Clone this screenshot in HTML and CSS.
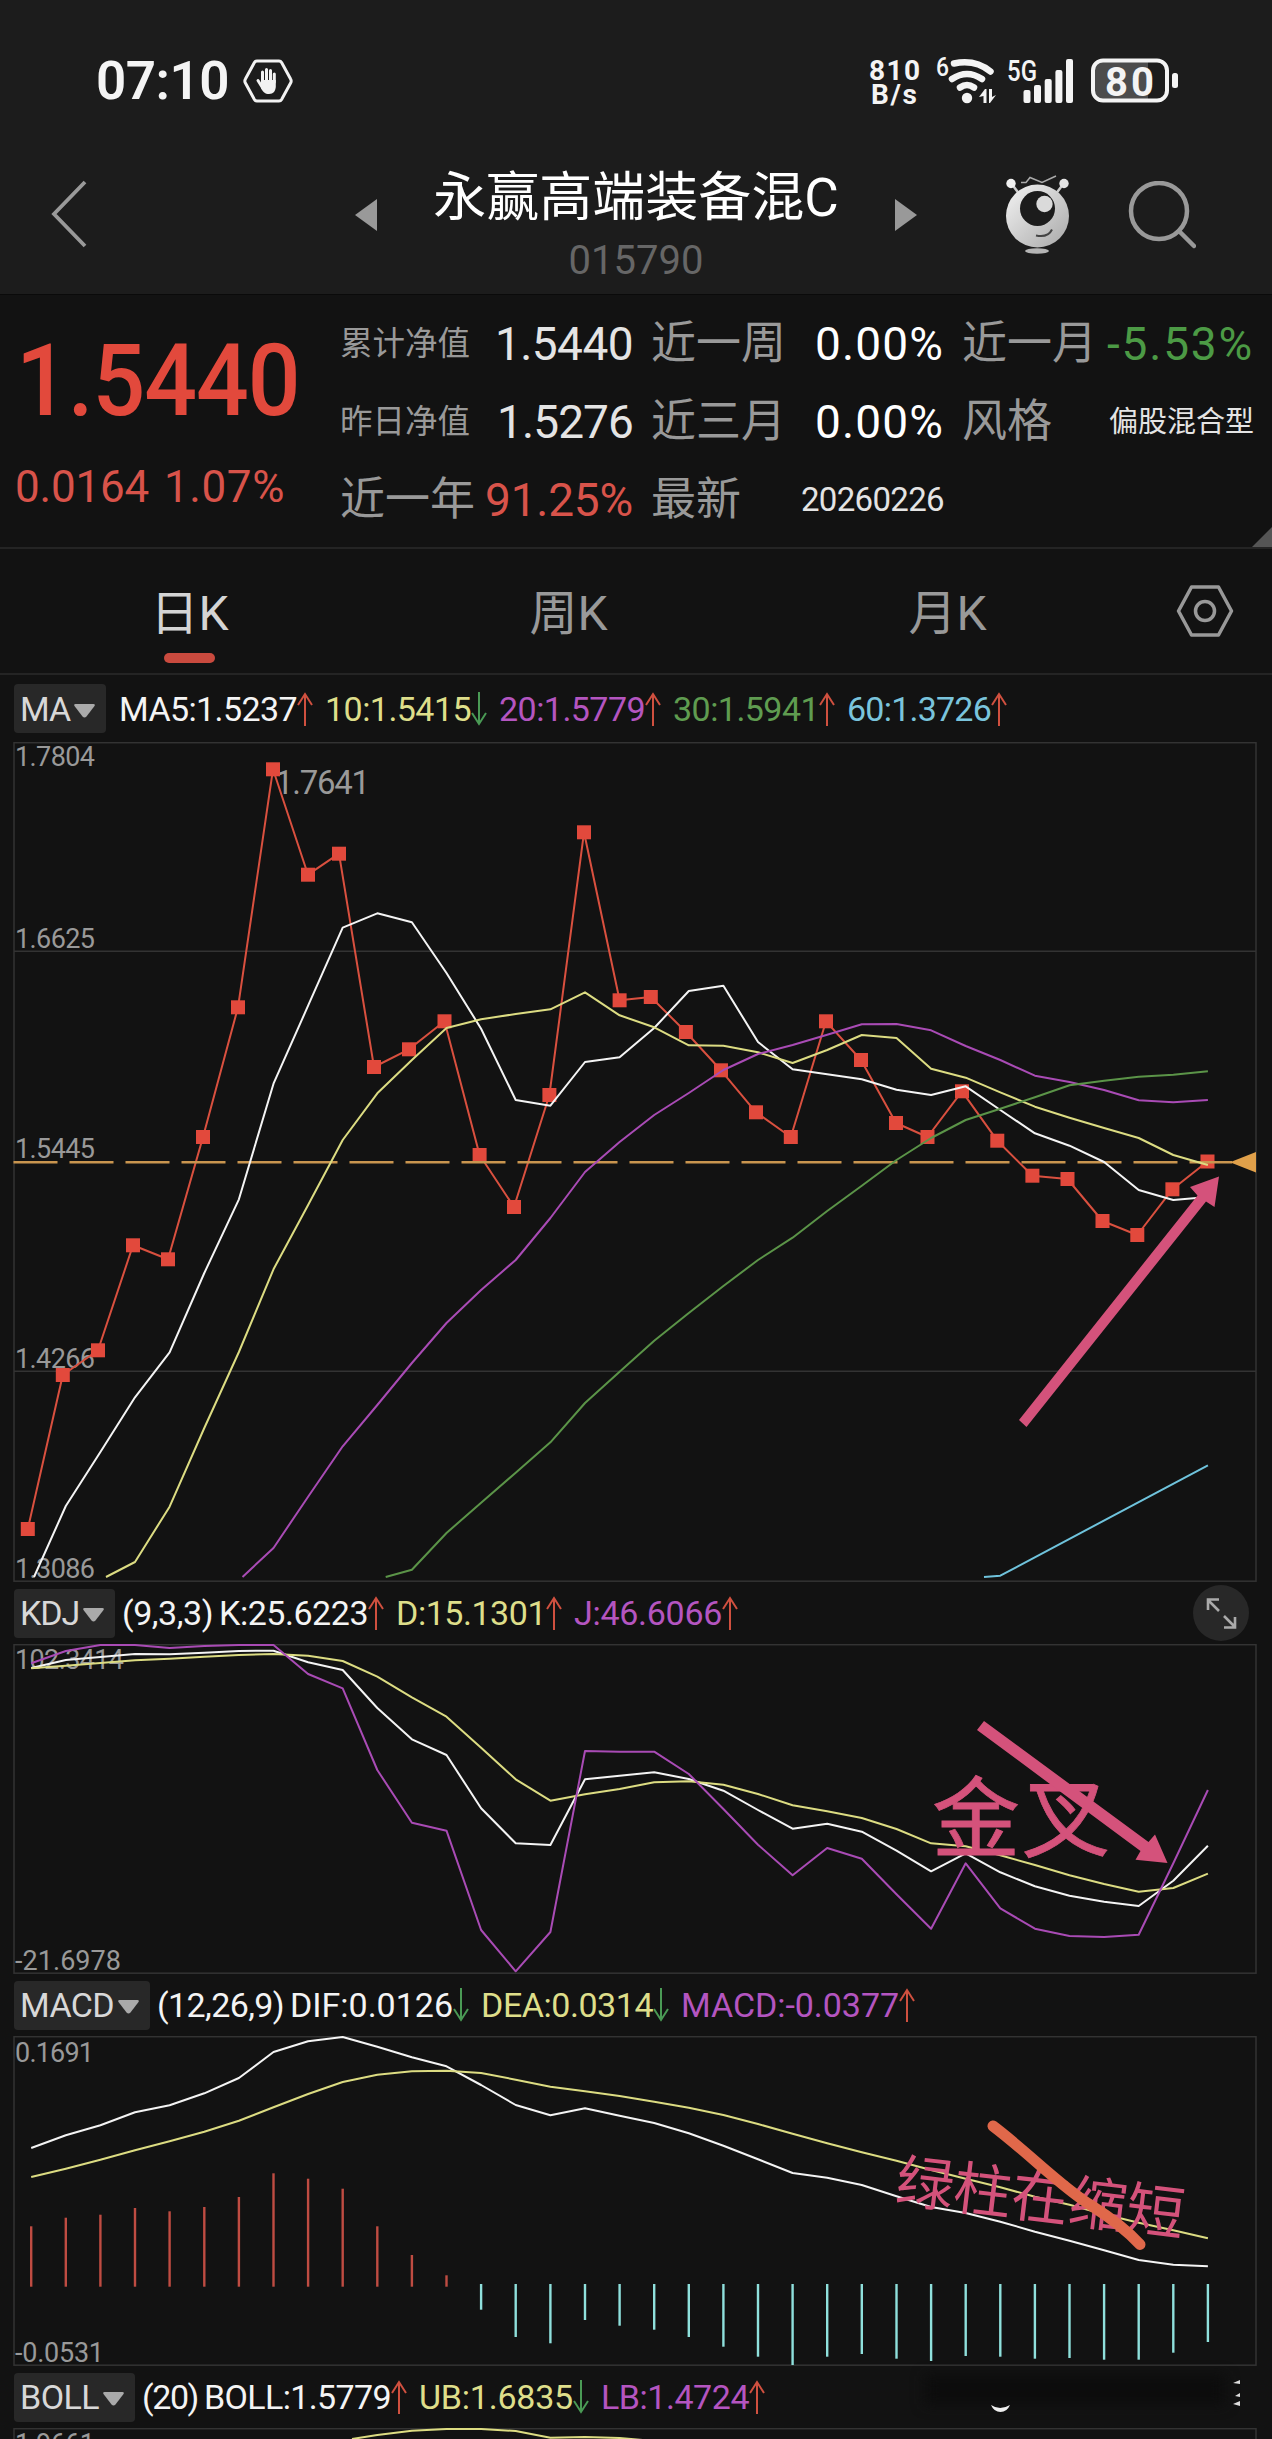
FILE: index.html
```html
<!DOCTYPE html>
<html lang="zh-CN">
<head>
    <meta charset="UTF-8">
    <meta name="viewport" content="width=device-width, initial-scale=1.0">
    <title>永赢高端装备混C 015790</title>
    <link rel="stylesheet" href="styles.css">
</head>
<body>
    <div class="screen">
        <header class="header">
            <div class="status">
                <div class="status-left">
                    <span class="clock" data-w="133">07:10</span>
                    <svg width="50" height="46" viewBox="0 0 50 46">
                        <path d="M14 3h22a3 3 0 0 1 2.600 1.500l9 16.500a4 4 0 0 1 0 4l-9 16.500a3 3 0 0 1-2.600 1.500H14a3 3 0 0 1-2.600-1.500l-9-16.500a4 4 0 0 1 0-4l9-16.500A3 3 0 0 1 14 3z" fill="none" stroke="#f2f2f2" stroke-width="3"/>
                        <path d="M19.500 25V14M23.500 23V11.500M27.500 23V12.500M31.300 24V16M15 22.500l5 8" stroke="#f2f2f2" stroke-width="3" stroke-linecap="round"/>
                        <path d="M18 22h14.800v6c0 5-2.500 8-6.800 8-4 0-6-2-8-6z" fill="#f2f2f2"/>
                    </svg>
                </div>
                <svg class="status-right" width="312" height="50" viewBox="868 56 312 50" fill="#f4f4f4">
                    <text x="869" y="79.500" font-size="28" font-weight="700" textLength="51">810</text>
                    <text x="871" y="103.500" font-size="28" font-weight="700" textLength="46">B/s</text>
                    <text x="936" y="76" font-size="26" font-weight="500" textLength="13" lengthAdjust="spacingAndGlyphs">6</text>
                    <g fill="none" stroke="#f4f4f4" stroke-width="6.500" stroke-linecap="round">
                        <path d="M954 63.500Q975 59 990.500 71.500"/>
                        <path d="M952 79Q967 69 982 79"/>
                        <path d="M960 87.500Q967 82.500 974 87.500"/>
                    </g>
                    <circle cx="967" cy="98" r="5.200"/>
                    <path d="M979 97l6-8h1.500v14h-3v-7zM989 89h3v8l4-2-6 8h-1z"/>
                    <text x="1007" y="81" font-size="29" font-weight="500" textLength="30" lengthAdjust="spacingAndGlyphs">5G</text>
                    <rect x="1023.500" y="90" width="7" height="13" rx="2"/>
                    <rect x="1034" y="85" width="7" height="18" rx="2"/>
                    <rect x="1044.700" y="79" width="7" height="24" rx="2"/>
                    <rect x="1055.400" y="70" width="7" height="33" rx="2"/>
                    <rect x="1066" y="59" width="7" height="44" rx="2"/>
                    <path d="M1103 61h45v39h-45q-9 0-9-9v-21q0-9 9-9z" fill="#4c4c4c"/>
                    <rect x="1093" y="60.500" width="74" height="40" rx="10" fill="none" stroke="#f4f4f4" stroke-width="4"/>
                    <rect x="1172" y="73" width="6" height="15" rx="2.500"/>
                    <text x="1105" y="95.500" font-size="40" font-weight="700" textLength="49">80</text>
                </svg>
            </div>
            <div class="nav">
                <div class="nav-side">
                    <svg width="36" height="68" viewBox="0 0 36 68"><path d="M34 2L3 34l31 32" fill="none" stroke="#999" stroke-width="3.800"/></svg>
                </div>
                <div class="nav-center">
                    <svg class="nav-arrow" width="22" height="32" viewBox="0 0 22 32"><path d="M22 0v32L0 16z" fill="#999"/></svg>
                    <div class="nav-title">
                        <h1>永赢高端装备混C</h1>
                        <p>015790</p>
                    </div>
                    <svg class="nav-arrow" width="22" height="32" viewBox="0 0 22 32"><path d="M0 0v32l22-16z" fill="#999"/></svg>
                </div>
                <div class="nav-tools">
                    <svg width="68" height="80" viewBox="1003 175 68 80">
                        <defs>
                            <linearGradient id="ball" x1="0" y1="0" x2="1" y2="1">
                                <stop offset="0" stop-color="#f4f4f4"/>
                                <stop offset="1" stop-color="#a8a8a8"/>
                            </linearGradient>
                        </defs>
                        <path d="M1011 183l9 12M1064 183l-9 12" stroke="#ccc" stroke-width="2.500"/>
                        <circle cx="1011" cy="183.500" r="4.700" fill="#f0f0f0"/>
                        <circle cx="1064" cy="183.500" r="4.700" fill="#e4e4e4"/>
                        <path d="M1021 182.500h5l4-5 12 5 14-6.500" fill="none" stroke="#aaa" stroke-width="1.500"/>
                        <circle cx="1037.500" cy="216" r="31.500" fill="url(#ball)"/>
                        <circle cx="1037.500" cy="208.500" r="17.500" fill="#1c1c1c"/>
                        <circle cx="1044.500" cy="204" r="8.200" fill="#dadada"/>
                        <path d="M1036 235.500Q1048 238 1052 229.500" fill="none" stroke="#444" stroke-width="2"/>
                        <ellipse cx="1037" cy="251" rx="12" ry="2.800" fill="#b5b5b5"/>
                    </svg>
                    <svg width="68" height="68" viewBox="1128 181 68 68" fill="none" stroke="#999" stroke-width="4.500" stroke-linecap="round">
                        <circle cx="1159" cy="211" r="28"/>
                        <path d="M1179 231l15 15"/>
                    </svg>
                </div>
            </div>
        </header>

        <section class="quote">
            <div class="price">
                <div class="price-now" data-w="308">1.5440</div>
                <div class="price-change"><span data-w="134">0.0164</span><span data-w="121">1.07%</span></div>
            </div>
            <div class="stats">
                <div class="stat"><span class="label small">累计净值</span><span class="value" data-w="138">1.5440</span></div>
                <div class="stat"><span class="label">近一周</span><span class="value white" data-w="129">0.00%</span></div>
                <div class="stat"><span class="label">近一月</span><span class="value green" data-w="147">-5.53%</span></div>
                <div class="stat"><span class="label small">昨日净值</span><span class="value" data-w="136">1.5276</span></div>
                <div class="stat"><span class="label">近三月</span><span class="value white" data-w="129">0.00%</span></div>
                <div class="stat"><span class="label">风格</span><span class="value type">偏股混合型</span></div>
                <div class="stat"><span class="label">近一年</span><span class="value red" data-w="148">91.25%</span></div>
                <div class="stat"><span class="label">最新</span><span class="value date" data-w="143">20260226</span></div>
            </div>
            <i class="corner"></i>
        </section>

        <nav class="tabs">
            <a class="tab active">日K</a>
            <a class="tab">周K</a>
            <a class="tab">月K</a>
            <svg class="settings" width="58" height="54" viewBox="0 0 58 54" fill="none" stroke="#999" stroke-width="3.500" stroke-linejoin="round">
                <path d="M15.500 3h27L55.500 27l-13 24h-27L2.500 27z"/>
                <circle cx="29" cy="27" r="9.500"/>
            </svg>
        </nav>

        <div class="info info-main">
            <span class="chip" data-name="MA"></span>
            <span class="item" data-w="178" data-dir="up">MA5:1.5237</span>
            <span class="item yellow" data-w="146" data-dir="down">10:1.5415</span>
            <span class="item purple" data-w="146" data-dir="up">20:1.5779</span>
            <span class="item leaf" data-w="146" data-dir="up">30:1.5941</span>
            <span class="item cyan" data-w="144" data-dir="up">60:1.3726</span>
        </div>
        <svg class="pane" id="ma" width="1272" height="840" viewBox="0 742 1272 840"></svg>

        <div class="info">
            <span class="chip" data-name="KDJ"></span>
            <span class="param" data-w="91">(9,3,3)</span>
            <span class="item" data-w="149" data-dir="up">K:25.6223</span>
            <span class="item yellow" data-w="150" data-dir="up">D:15.1301</span>
            <span class="item purple" data-w="148" data-dir="up">J:46.6066</span>
            <svg class="expand" width="56" height="56" viewBox="0 0 56 56">
                <circle cx="28" cy="28" r="28" fill="#282828"/>
                <path d="M26 26L15 15M15 25V14.500H26M31 31l11 11M42 32v10.500H31" fill="none" stroke="#aaa" stroke-width="2.600"/>
            </svg>
        </div>
        <svg class="pane" id="kdj" width="1272" height="330" viewBox="0 1644 1272 330"></svg>

        <div class="info">
            <span class="chip" data-name="MACD"></span>
            <span class="param" data-w="127">(12,26,9)</span>
            <span class="item" data-w="163" data-dir="down">DIF:0.0126</span>
            <span class="item yellow" data-w="172" data-dir="down">DEA:0.0314</span>
            <span class="item purple" data-w="218" data-dir="up">MACD:-0.0377</span>
        </div>
        <svg class="pane" id="macd" width="1272" height="330" viewBox="0 2036 1272 330"></svg>

        <div class="info">
            <span class="chip" data-name="BOLL"></span>
            <span class="param" data-w="56">(20)</span>
            <span class="item" data-w="187" data-dir="up">BOLL:1.5779</span>
            <span class="item yellow" data-w="154" data-dir="down">UB:1.6835</span>
            <span class="item purple" data-w="148" data-dir="up">LB:1.4724</span>
        </div>
        <svg class="pane" id="boll" width="1272" height="11" viewBox="0 2428 1272 11"></svg>

        <!-- user drawn notes on top of the charts -->
        <svg class="notes" width="1272" height="2439" viewBox="0 0 1272 2439">
            <g fill="#d4527b">
                <path d="M1019 1420L1197.500 1195.500L1190 1187L1219 1176.500L1214.500 1207L1206 1201.500L1026.500 1427z"/>
                <text x="932" y="1850" font-size="88" letter-spacing="2" stroke="#d4527b" stroke-width="0.800">金叉</text>
                <path d="M984 1721L1148.500 1842L1155 1834.500L1167.500 1863L1135.500 1859.700L1140.500 1851L977 1730z"/>
                <text x="894" y="2201" font-size="58" transform="rotate(6.800 894 2201)">绿柱在缩短</text>
            </g>
            <path d="M993 2126C1030 2154 1060 2186 1092 2206Q1122 2225 1140 2244.500" fill="none" stroke="#e0684a" stroke-width="11" stroke-linecap="round"/>
            <rect class="smudge" x="925" y="2376" width="300" height="28"/>
            <path d="M991 2405q9 6 19 0q-3 7-9.500 7t-9.500-7z" fill="#eee"/>
            <path d="M1233 2383l7-3v4zM1235 2396l5-3v4zM1233 2404l7-3v5z" fill="#ddd"/>
        </svg>
    </div>

    <script src="chart.js"></script>
</body>
</html>
```

FILE: styles.css
```css
* { box-sizing: border-box; }
body {
    margin: 0;
    background: #121212;
    color: #e4e4e4;
    font-family: Roboto, "Noto Sans CJK SC", sans-serif;
}
h1, p { margin: 0; font-weight: 400; }
svg { display: block; flex: none; }
.screen { position: relative; width: 1272px; height: 2439px; overflow: hidden; }
[data-w] { white-space: nowrap; display: inline-block; }

/* header */
.header { height: 295px; background: #1c1c1c; border-bottom: 1px solid #0a0a0a; }
.status { height: 162px; padding: 0 92px 0 96px; display: flex; justify-content: space-between; align-items: center; }
.status-left { display: flex; align-items: center; gap: 14px; }
.status-right { overflow: visible; }
.clock { font-size: 53px; font-weight: 600; line-height: 64px; color: #f4f4f4; }
.nav { height: 132px; display: grid; grid-template-columns: 335px 602px 335px; }
.nav-side { padding: 18px 0 0 51px; }
.nav-center { display: flex; justify-content: space-between; padding: 0 20px; }
.nav-arrow { margin-top: 37px; }
.nav-title { text-align: center; padding-top: 4px; }
.nav-title h1 { font-size: 53px; line-height: 64px; color: #fff; white-space: nowrap; }
.nav-title p { font-size: 40px; line-height: 48px; margin-top: 7px; color: #666; }
.nav-tools { display: flex; gap: 57px; padding: 13px 0 0 66px; }
.nav-tools svg + svg { margin-top: 6px; }

/* quote */
.quote { position: relative; height: 254px; padding: 0 18px 0 16px; display: flex; border-bottom: 2px solid #242424; }
.price { width: 324px; color: #e2493c; }
.price-now { font-size: 101px; font-weight: 500; line-height: 120px; margin-top: 26px; transform: scaleX(0.92); transform-origin: left; }
.price-change { display: flex; gap: 15px; font-size: 44px; line-height: 54px; margin-top: 19px; margin-left: -1px; color: #d8534a; }
.stats { width: 914px; padding-top: 10px; display: grid; grid-template-columns: 293px 293px 292px; grid-auto-rows: 78px; column-gap: 18px; }
.stat { display: flex; justify-content: space-between; align-items: center; white-space: nowrap; }
.label { font-size: 45px; line-height: 66px; color: #999; }
.label.small { font-size: 32.5px; }
.value { font-size: 46px; line-height: 66px; }
.value.white { color: #fff; }
.value.green { color: #4c9a45; }
.value.red { color: #d8534a; }
.value.type { font-size: 29px; }
.value.date { font-size: 33px; }
.corner { position: absolute; right: 0; bottom: 0; border-left: 20px solid transparent; border-bottom: 20px solid #555; }

/* tabs */
.tabs { height: 126px; display: flex; border-bottom: 2px solid #242424; }
.tab { position: relative; width: 379px; text-align: center; font-size: 48px; line-height: 129px; color: #999; }
.tab.active { color: #d4d4d4; }
.tab.active::after { content: ""; position: absolute; left: 164px; bottom: 10px; width: 51px; height: 10px; border-radius: 5px; background: #c94a3e; }
.settings { margin: 35px 0 0 39px; }

/* indicator rows */
.info { height: 62px; padding-left: 14px; display: flex; align-items: center; font-size: 34px; line-height: 48px; color: #f4f4f4; }
.info-main { height: 67px; }
.chip { height: 49px; padding: 0 11px 0 6px; margin-right: 1px; display: flex; align-items: center; gap: 4px; background: #282828; border-radius: 4px; color: #d8d8d8; }
.chip svg { margin-top: 4px; }
.param { margin-left: 6px; }
.item { display: flex; align-items: center; margin-left: 12px; }
.param + .item { margin-left: 6px; }
.yellow { color: #dede8a; }
.purple { color: #b455c0; }
.leaf { color: #5f9c50; }
.cyan { color: #7ac4dc; }
.expand { margin: 0 23px 0 auto; }

/* charts */
.pane text { font-size: 27px; fill: #999; }
.pane .peak { font-size: 33px; }
.pane .frame { fill: none; stroke: #333; stroke-width: 1.5; }
.pane polyline { fill: none; stroke-width: 2; stroke-linejoin: round; }
.notes { position: absolute; left: 0; top: 0; }
.smudge { fill: #0c0c0c; filter: blur(7px); }
```

FILE: chart.js
```javascript
var WHITE = '#f4f4f4', YELLOW = '#dcdc82', PURPLE = '#a94bb5', GREEN = '#5b9448', CYAN = '#6fc3dc', RED = '#d9503f';
var TEAL = '#8fe0dc';

// x of the i-th trading day
function dayX(i) {
    return 31.2 + i * 34.61;
}

function line(ys, color, from, start) {
    var pts = ys.map(function (y, i) { return dayX(i + (from || 0)).toFixed(1) + ',' + y; });
    if (start) pts.unshift(start);
    return '<polyline stroke="' + color + '" points="' + pts.join(' ') + '"/>';
}

function frame(y, h) {
    return '<rect class="frame" x="14" y="' + (y + 0.7) + '" width="1242" height="' + h + '"/>';
}

function label(text, y, w) {
    return '<text x="15" y="' + y + '" textLength="' + w + '">' + text + '</text>';
}

function grid(y) {
    return '<path class="frame" d="M14 ' + y + 'H1256"/>';
}

// fund price with moving averages
var priceX = [27.8, 62.8, 98, 133, 168, 203, 238, 273, 308, 339, 374, 409, 444.5, 479.6, 514, 549.4, 584, 619.6, 650.8, 685.9, 721, 756, 790.8, 826, 861, 896, 927.5, 962, 997.3, 1032.4, 1067.5, 1102.5, 1137.3, 1172.4, 1207.5];
var priceY = [1529, 1375, 1350.3, 1245.3, 1259.3, 1137, 1007.3, 769.3, 874.7, 853.7, 1067, 1049.3, 1021.3, 1155, 1207, 1095, 832.3, 1000.3, 997, 1032, 1070.3, 1112.3, 1137, 1021.3, 1060, 1123, 1137, 1091.3, 1140.7, 1175.7, 1179, 1221, 1235, 1189.3, 1161.5];

var ma5 = [1506, 1452, 1397.3, 1352.3, 1273, 1199.3, 1083.7, 1005.7, 927.7, 913.3, 922.3, 973, 1028.7, 1100, 1105.7, 1062, 1057.3, 1028, 991, 985.7, 1042, 1069.3, 1074.3, 1079.3, 1089.7, 1095, 1086.3, 1110, 1133.3, 1145.7, 1162, 1190, 1200, 1197];
var ma10 = [1562, 1506.7, 1428, 1352, 1269.3, 1205, 1140, 1093.3, 1060, 1028, 1019.3, 1014, 1009.3, 992.3, 1015.3, 1027.3, 1045.3, 1045.7, 1052.3, 1063, 1050, 1035, 1038, 1068.7, 1077.7, 1092.3, 1106.7, 1117.7, 1128, 1138, 1155, 1165];
var ma20 = [1548, 1496.7, 1446.3, 1405, 1363, 1323, 1290, 1260, 1218, 1172, 1142, 1115, 1093, 1070, 1054, 1045, 1034.7, 1024.3, 1024, 1030.3, 1046, 1060, 1075.7, 1082, 1090, 1100.3, 1102.3, 1100];
var ma30 = [1569.7, 1533, 1502.7, 1472.7, 1442.3, 1403, 1371.7, 1340.7, 1313, 1286, 1260, 1237.7, 1211, 1185.7, 1160, 1138, 1120, 1108.7, 1097.3, 1085.3, 1080.7, 1076.7, 1074.7, 1071.3];

var price = priceX.map(function (x, i) { return x + ',' + priceY[i]; }).join(' ');
var marks = priceX.map(function (x, i) {
    return '<rect x="' + (x - 7) + '" y="' + (priceY[i] - 7) + '" width="14" height="14" fill="#e2493c"/>';
}).join('');

document.getElementById('ma').innerHTML =
    frame(742, 838.5) + grid(951.2) + grid(1371.3) +
    label('1.7804', 766, 80) + label('1.6625', 948, 80) + label('1.5445', 1158, 80) +
    label('1.4266', 1368, 80) + label('1.3086', 1577.5, 80) +
    '<text class="peak" x="275" y="794" textLength="95">1.7641</text>' +
    '<polyline stroke="' + RED + '" points="' + price + '"/>' + marks +
    '<path d="M13.500 1162.300H1232" stroke="#c9954f" stroke-width="2.500" stroke-dasharray="44 12"/>' +
    '<path d="M1230 1162.300L1256 1152V1172.500z" fill="#e0a04a"/>' +
    line(ma5, WHITE, 1, '34,1577') +
    line(ma10, YELLOW, 3, '106,1577') +
    line(ma20, PURPLE, 7, '242.5,1577') +
    line(ma30, GREEN, 11, '385.7,1577') +
    '<polyline stroke="' + CYAN + '" points="984,1577 1000.300,1575.700 1207.900,1465.300"/>';

// KDJ
var k = [1668, 1660, 1657, 1654, 1654.3, 1652.7, 1651, 1650.7, 1662.3, 1670, 1708, 1739.3, 1755, 1808.3, 1843.3, 1845, 1779.3, 1775.7, 1772.3, 1779, 1790.7, 1810, 1828.7, 1823.7, 1831.7, 1850.7, 1871.3, 1853.3, 1872.3, 1886.3, 1895.7, 1901.7, 1906, 1880.7, 1845.7];
var d = [1668.3, 1665.7, 1663, 1660.3, 1658.7, 1656.7, 1655, 1654, 1655.7, 1661, 1676.7, 1697.3, 1716.7, 1747.7, 1779.3, 1800.7, 1794.3, 1789, 1782.3, 1781.3, 1784.7, 1794, 1805.3, 1811.3, 1818, 1829, 1843.3, 1846.3, 1855.3, 1865, 1875.3, 1884, 1891.7, 1888, 1873.7];
var j = [1663.3, 1651, 1645, 1645, 1648, 1646, 1645, 1645, 1674, 1688.3, 1770, 1822.7, 1830.7, 1930, 1971.3, 1932, 1751, 1751.7, 1751.7, 1774, 1809, 1844.7, 1875.3, 1848, 1858.7, 1894.3, 1928.7, 1863.3, 1908.3, 1928.7, 1936, 1937, 1934.7, 1863.3, 1790];

document.getElementById('kdj').innerHTML =
    frame(1644, 328.5) + label('102.3414', 1668.5, 109) + label('-21.6978', 1969.5, 106) +
    line(k, WHITE) + line(d, YELLOW) + line(j, PURPLE);

// MACD
var dif = [2148, 2135.3, 2125.3, 2112.3, 2105.3, 2093.3, 2078, 2052, 2041.3, 2037, 2046.7, 2057.3, 2066.3, 2085, 2105, 2115.3, 2108.3, 2115.7, 2123, 2133.3, 2145.7, 2159.3, 2173, 2177.7, 2185, 2196.3, 2207, 2213, 2221.7, 2231.7, 2240.7, 2250.3, 2260, 2264.7, 2266.3];
var dea = [2177, 2168.7, 2159.7, 2150.3, 2141.3, 2131.7, 2120.7, 2107.3, 2094, 2082, 2074.7, 2071.3, 2070.7, 2073, 2079.7, 2086.7, 2091.3, 2096, 2101.7, 2107.7, 2115, 2124, 2133.7, 2143.3, 2152.3, 2160.7, 2170, 2178.7, 2187.3, 2196.7, 2204.7, 2214.3, 2222.7, 2230.3, 2238.3];
var redTops = [2226.3, 2217.7, 2214.7, 2208, 2211.3, 2207, 2197, 2173.3, 2178.7, 2188.7, 2226.3, 2255, 2275.3];
var tealEnds = [2309.7, 2337, 2343.3, 2320, 2325.7, 2329.7, 2337, 2346.7, 2356.7, 2365, 2356.7, 2354, 2358.7, 2361, 2356, 2356.7, 2358.7, 2358, 2359.7, 2359.7, 2352.7, 2342];

function bars(list, base, color, from) {
    return list.map(function (y, i) {
        return '<path stroke="' + color + '" stroke-width="2.400" d="M' + dayX(i + from).toFixed(1) + ' ' + base + 'V' + y + '"/>';
    }).join('');
}

document.getElementById('macd').innerHTML =
    frame(2036, 328.5) + label('0.1691', 2061.5, 79) + label('-0.0531', 2361.5, 89) +
    bars(redTops, 2286.7, '#bf4c42', 0) + bars(tealEnds, 2284, TEAL, 13) +
    line(dif, WHITE) + line(dea, YELLOW);

// BOLL, only the top of it fits on the screen
document.getElementById('boll').innerHTML =
    frame(2428, 300) + label('1.9661', 2453, 80) +
    line([2435, 2430.7, 2429, 2429, 2431, 2437.7, 2437, 2438, 2441], YELLOW, 10, '352,2439');

// indicator chips and trend arrows
document.querySelectorAll('.chip').forEach(function (chip) {
    var widths = { MA: 50, KDJ: 59, MACD: 94, BOLL: 79 };
    var name = chip.dataset.name;
    chip.innerHTML = '<span data-w="' + widths[name] + '">' + name + '</span>' +
        '<svg width="21" height="14" viewBox="0 0 21 14"><path d="M1.500 0h18q2 0 1 2l-8 10.500q-2 2-4 0L.5 2q-1-2 1-2z" fill="#aaa"/></svg>';
});

document.querySelectorAll('[data-w]').forEach(function (el) {
    var gap = (el.dataset.w - textWidth(el)) / el.textContent.length;
    el.style.letterSpacing = gap.toFixed(3) + 'px';
});

function textWidth(el) {
    var probe = document.createElement('canvas').getContext('2d');
    var style = getComputedStyle(el);
    probe.font = style.fontWeight + ' ' + style.fontSize + ' ' + style.fontFamily;
    return probe.measureText(el.textContent).width;
}

document.querySelectorAll('.item').forEach(function (el) {
    var up = el.dataset.dir === 'up';
    el.insertAdjacentHTML('beforeend',
        '<svg width="16" height="34" viewBox="0 0 16 34" fill="none" stroke="' + (up ? '#d0503f' : '#4a9a55') + '" stroke-width="2">' +
        (up ? '<path d="M8 34V2M1 13L8 2l7 11"/>' : '<path d="M8 0v32M1 21l7 11 7-11"/>') + '</svg>');
});
```
